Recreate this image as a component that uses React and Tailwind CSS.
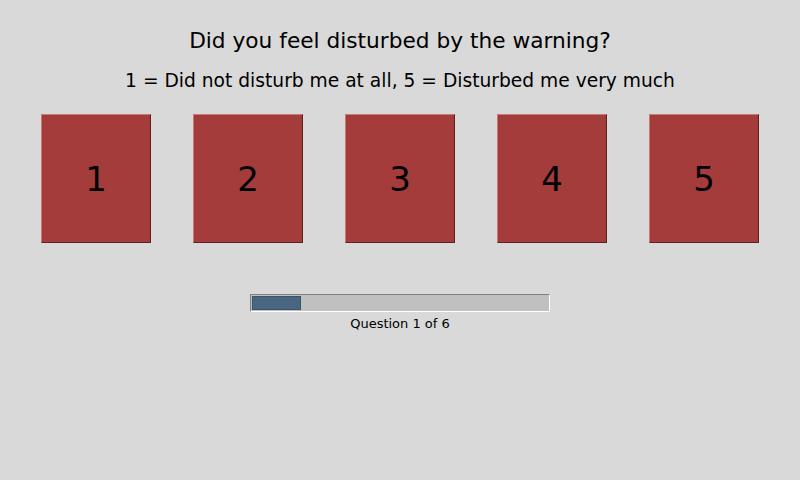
export default function App() {
    const answers = [1, 2, 3, 4, 5];
    const current = 1;
    const total = 6;

    return (
        <div
            className="w-[800px] h-[480px] bg-[#d9d9d9] flex flex-col items-center pt-[28px] text-black"
            style={{ fontFamily: '"DejaVu Sans", sans-serif' }}
        >
            <h1 className="text-[21.7px] leading-[26px]">Did you feel disturbed by the warning?</h1>
            <p className="mt-[16px] text-[18.67px] leading-[22px]">
                1 = Did not disturb me at all, 5 = Disturbed me very much
            </p>

            {/* answer buttons */}
            <div className="mt-[22px] flex gap-[42px]">
                {answers.map((n) => (
                    <button
                        key={n}
                        className="w-[110px] h-[129px] bg-[#a33c3a] border border-t-[#c97a78] border-l-[#c97a78] border-b-[#5c2221] border-r-[#5c2221] flex items-center justify-center text-[34px] leading-none"
                    >
                        {n}
                    </button>
                ))}
            </div>

            {/* progress */}
            <div className="mt-[51px] w-[300px] h-[18px] bg-[#c0c0c0] border border-t-[#808080] border-l-[#808080] border-b-white border-r-white p-px">
                <div
                    className="h-full bg-[#48667f] border border-[#3a5368]"
                    style={{ width: `${(current / total) * 100}%` }}
                />
            </div>
            <p className="mt-[4px] text-[13px] leading-[16px]">Question {current} of {total}</p>
        </div>
    );
}
